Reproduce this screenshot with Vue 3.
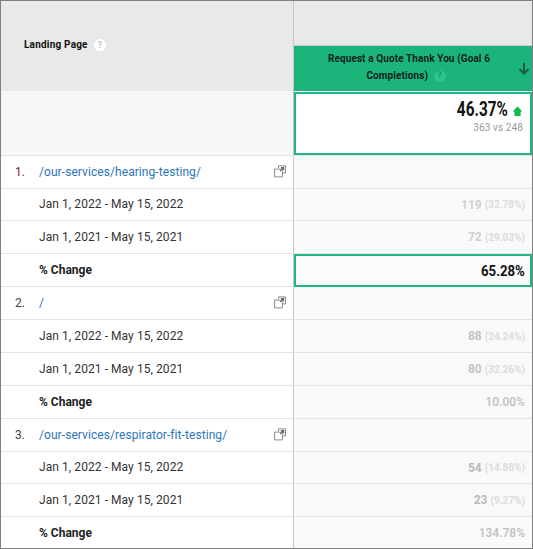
<script setup>
const groups = [
  {
    rank: '1.',
    path: '/our-services/hearing-testing/',
    rankClass: 'rank-first',
    rows: [
      { label: 'Jan 1, 2022 - May 15, 2022', value: '119', pct: '(32.78%)', short: true, tone: 'faint' },
      { label: 'Jan 1, 2021 - May 15, 2021', value: '72', pct: '(29.03%)', tone: 'faint' },
    ],
    change: '65.28%',
    highlight: true,
  },
  {
    rank: '2.',
    path: '/',
    rows: [
      { label: 'Jan 1, 2022 - May 15, 2022', value: '88', pct: '(24.24%)', tone: 'mid' },
      { label: 'Jan 1, 2021 - May 15, 2021', value: '80', pct: '(32.26%)', tone: 'mid' },
    ],
    change: '10.00%',
  },
  {
    rank: '3.',
    path: '/our-services/respirator-fit-testing/',
    rows: [
      { label: 'Jan 1, 2022 - May 15, 2022', value: '54', pct: '(14.88%)', short: true, tone: 'dark' },
      { label: 'Jan 1, 2021 - May 15, 2021', value: '23', pct: '(9.27%)', tone: 'dark' },
    ],
    change: '134.78%',
  },
]
</script>

<template>
  <div class="report">
    <div class="head">
      <div class="head-left">
        <span class="head-title">Landing Page</span>
        <span class="help">?</span>
      </div>
      <div class="head-right">
        <div class="goal">
          <div class="goal-text">
            Request a Quote Thank You (Goal 6 Completions)
            <span class="help help-green">?</span>
          </div>
          <svg class="sort" width="12" height="13" viewBox="0 0 12 13">
            <path d="M6 1v10.5M1.5 7 6 11.5 10.5 7" fill="none" stroke="#1d5c46" stroke-width="2" />
          </svg>
        </div>
      </div>
    </div>

    <div class="summary">
      <div class="summary-left"></div>
      <div class="summary-right">
        <div class="summary-box">
          <div class="big">
            <span class="big-num">46.37%</span>
            <svg class="up" width="11" height="11" viewBox="0 0 11 11">
              <path d="M5.5 .5 10.5 5.5H8.6V10H2.4V5.5H.5Z" fill="#0fb84d" />
            </svg>
          </div>
          <div class="versus">363 vs 248</div>
        </div>
      </div>
    </div>

    <template v-for="g in groups" :key="g.rank">
      <div class="row">
        <div class="cell-left">
          <span class="rank" :class="g.rankClass">{{ g.rank }}</span>
          <span class="path">{{ g.path }}</span>
          <svg class="popout" width="12" height="13" viewBox="0 0 12 13">
            <path d="M4.5 3V.9h7v7H9M.6 4.1h7.8v7.8H.6Z" fill="none" stroke="#8a8a8a" />
            <path d="M6 6 9.5 2.6M7 2.6h2.6v2.6" fill="none" stroke="#666" stroke-width="1.2" />
          </svg>
        </div>
        <div class="cell-right"></div>
      </div>
      <div v-for="r in g.rows" :key="r.label" class="row" :class="{ short: r.short }">
        <div class="cell-left sub">{{ r.label }}</div>
        <div class="cell-right">
          <span class="val" :class="r.tone">{{ r.value }}</span>
          <span class="pct">{{ r.pct }}</span>
        </div>
      </div>
      <div class="row">
        <div class="cell-left sub change">% Change</div>
        <div class="cell-right" :class="{ flush: g.highlight }">
          <div v-if="g.highlight" class="change-box">
            <span class="change-strong">{{ g.change }}</span>
          </div>
          <span v-else class="change-val">{{ g.change }}</span>
        </div>
      </div>
    </template>
  </div>
</template>

<style scoped>
.report {
  width: 533px;
  height: 549px;
  box-sizing: border-box;
  border: 1px solid #808080;
  overflow: hidden;
  background: #fff;
  font-family: Roboto, "Liberation Sans", sans-serif;
  color: #222;
}
.head {
  display: flex;
  height: 90px;
}
.head-left {
  width: 292px;
  background: #e9e9e9;
  display: flex;
  align-items: center;
  gap: 6px;
  padding: 0 0 3px 23px;
  box-sizing: border-box;
}
.head-title {
  font-size: 10px;
  font-weight: 700;
  color: #111;
  letter-spacing: .2px;
}
.help {
  width: 12px;
  height: 12px;
  border-radius: 50%;
  background: #fff;
  color: #c8c8c8;
  font-size: 9px;
  font-weight: 700;
  display: flex;
  align-items: center;
  justify-content: center;
}
.head-right {
  flex: 1;
  background: #e9e9e9;
  border-left: 1px solid #c6c6c6;
  padding-top: 44px;
  display: flex;
}
.goal {
  flex: 1;
  background: #1bb57b;
  border-top: 1px solid #ccc;
  display: flex;
  position: relative;
}
.goal-text {
  width: 216px;
  margin-left: 7px;
  padding-top: 4px;
  font-size: 10px;
  font-weight: 700;
  line-height: 17px;
  text-align: center;
  color: #10231c;
  letter-spacing: .1px;
}
.help-green {
  display: inline-flex;
  background: #30c48d;
  color: #15996a;
  margin: 0 6px 0 3px;
  vertical-align: 1px;
}
.sort {
  position: absolute;
  right: 2px;
  top: 16px;
}
.summary {
  display: flex;
  height: 65px;
  box-sizing: border-box;
  border-bottom: 1px solid #e2e2e2;
}
.summary-left {
  width: 292px;
  background: #f7f7f7;
}
.summary-right {
  flex: 1;
  border-left: 1px solid #c6c6c6;
  background: #f7f7f7;
  padding-top: 1px;
  display: flex;
}
.summary-box {
  flex: 1;
  border: 2px solid #1fb884;
  background: #fff;
  text-align: right;
  padding: 5px 7px 0 0;
}
.big {
  display: flex;
  justify-content: flex-end;
  align-items: center;
  gap: 4px;
  height: 21px;
}
.big-num {
  font-size: 21px;
  font-weight: 700;
  color: #111;
  display: inline-block;
  margin-bottom: 2px;
  transform: scaleX(.73);
  transform-origin: right center;
}
.up {
  margin-top: 4px;
}
.versus {
  font-size: 10px;
  color: #999;
  margin-top: 2px;
  letter-spacing: .1px;
}
.row {
  display: flex;
  height: 33px;
  box-sizing: border-box;
  border-bottom: 1px solid #e4e4e4;
}
.row.short {
  height: 32px;
}
.cell-left {
  width: 292px;
  display: flex;
  align-items: center;
  font-size: 12px;
  letter-spacing: .07px;
  box-sizing: border-box;
  padding: 0 0 1px 14px;
  position: relative;
}
.cell-left.sub {
  padding-left: 38px;
  color: #333;
}
.cell-left.change {
  font-weight: 700;
  color: #222;
  letter-spacing: 0;
}
.rank {
  width: 24px;
  color: #444;
}
.rank-first {
  color: #7a1440;
}
.path {
  color: #2b76b9;
}
.popout {
  position: absolute;
  right: 7px;
  top: 9px;
}
.cell-right {
  flex: 1;
  background: #f9f9f9;
  border-left: 1px solid #c6c6c6;
  display: flex;
  align-items: center;
  justify-content: flex-end;
  padding-right: 7px;
  gap: 3px;
}
.cell-right.flush {
  padding-right: 0;
  align-items: flex-start;
}
.change-box {
  flex: 1;
  height: 33px;
  box-sizing: border-box;
  border: 2px solid #1fb884;
  background: #fbfbfb;
  display: flex;
  align-items: center;
  justify-content: flex-end;
  padding-right: 5px;
}
.change-strong {
  font-size: 15px;
  font-weight: 700;
  color: #111;
  display: inline-block;
  transform: scaleX(.88);
  transform-origin: right center;
}
.val {
  font-size: 12px;
  font-weight: 700;
}
.val.faint {
  color: #d0d0d0;
}
.val.mid {
  color: #c4c4c4;
}
.val.dark {
  color: #bababa;
}
.pct {
  font-size: 10px;
  font-weight: 700;
  color: #dcdcdc;
}
.change-val {
  font-size: 12px;
  font-weight: 500;
  color: #bfbfbf;
}
</style>
